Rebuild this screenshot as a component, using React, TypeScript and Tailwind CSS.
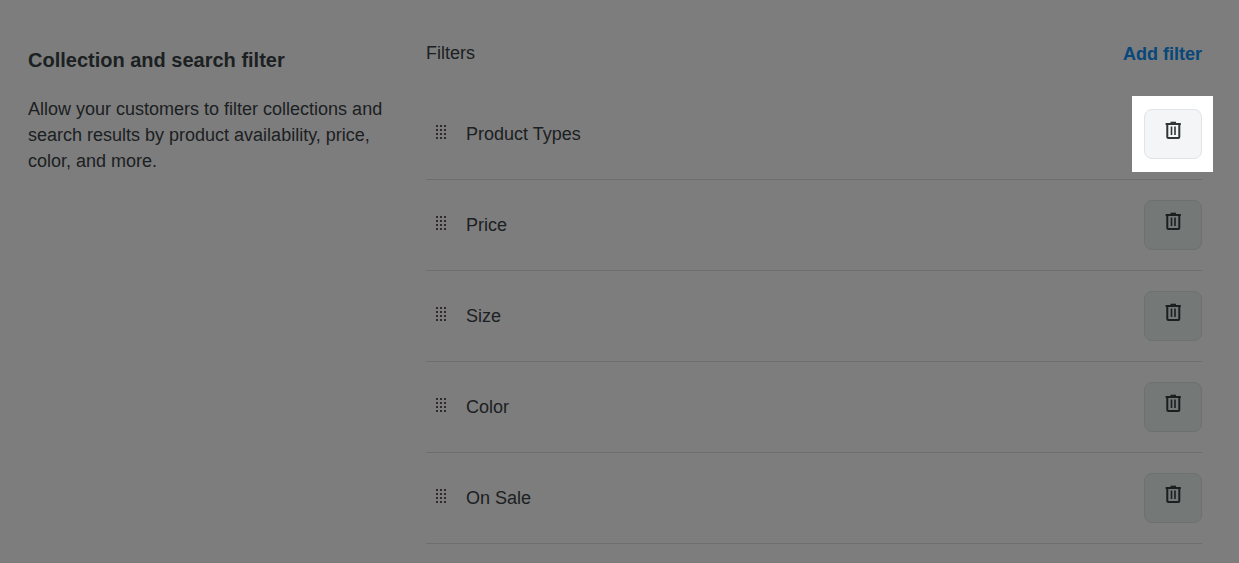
const filters = [
  { id: "product-types", label: "Product Types", highlighted: true },
  { id: "price", label: "Price", highlighted: false },
  { id: "size", label: "Size", highlighted: false },
  { id: "color", label: "Color", highlighted: false },
  { id: "on-sale", label: "On Sale", highlighted: false },
];

const TrashIcon = () => (
  <svg
    width="16"
    height="18"
    viewBox="0 0 16 18"
    fill="none"
    stroke="currentColor"
    aria-hidden="true"
  >
    <path d="M5.5 1.5h5.5" strokeWidth="1.6" />
    <path d="M0.6 3h15.2" strokeWidth="2" />
    <path d="M2.3 3v13q0 1 1 1h10q1 0 1-1V3" strokeWidth="2" />
    <path d="M6.5 5.5v8.5M10 5.5v8.5" strokeWidth="1.6" />
  </svg>
);

const DragHandle = () => (
  <svg width="14" height="14" viewBox="0 0 14 14" fill="currentColor" aria-hidden="true">
    {[0, 4, 8, 12].map((y) =>
      [2, 6, 10].map((x) => (
        <rect key={`${x}-${y}`} x={x} y={y} width="2" height="2" />
      )),
    )}
  </svg>
);

const FilterRow = ({ label, highlighted }: { label: string; highlighted: boolean }) => (
  <li className="flex items-center border-b border-[#6e6e72] py-5">
    <button
      type="button"
      aria-label={`Move ${label}`}
      className="mb-1 ml-2 flex w-8 cursor-grab text-[#302a2b]"
    >
      <DragHandle />
    </button>
    <span className="flex-1 leading-6">{label}</span>
    <div className="relative">
      {/* spotlight around the first delete button */}
      {highlighted && (
        <div className="absolute -inset-y-[13px] -right-[11px] -left-3 bg-white" />
      )}
      <button
        type="button"
        aria-label={`Delete ${label}`}
        className={`relative flex h-[50px] w-[58px] items-center justify-center rounded-lg border pb-2 ${
          highlighted
            ? "border-[#e1e3e5] bg-[#f3f5f7] text-[#303638]"
            : "border-[#6d7070] bg-[#747877] text-[#1b1f20]"
        }`}
      >
        <TrashIcon />
      </button>
    </div>
  </li>
);

export default function App() {
  return (
    <main className="flex min-h-screen bg-[#7d7d7d] pr-[37px] pl-7 font-['Liberation_Sans',Arial,sans-serif] text-[18px] text-[#1b2022]">
      <section className="w-[398px] shrink-0 pt-12 pr-10">
        <h1 className="text-[20px] leading-6 font-bold">Collection and search filter</h1>
        <p className="mt-6 leading-[26px]">
          Allow your customers to filter collections and search results by product
          availability, price, color, and more.
        </p>
      </section>

      <section className="min-w-0 flex-1 pt-10">
        <div className="flex h-[49px] items-start justify-between">
          <h2 className="leading-[26px]">Filters</h2>
          <a href="#add-filter" className="leading-7 font-bold text-[#07477a]">
            Add filter
          </a>
        </div>
        <ul>
          {filters.map((filter) => (
            <FilterRow key={filter.id} label={filter.label} highlighted={filter.highlighted} />
          ))}
        </ul>
      </section>
    </main>
  );
}
